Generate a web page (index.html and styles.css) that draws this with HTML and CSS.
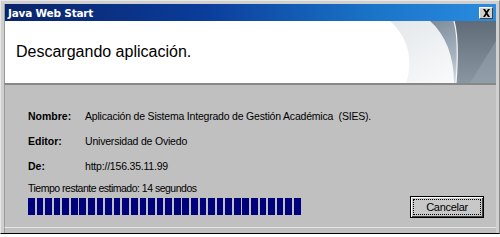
FILE: index.html
```html
<!DOCTYPE html>
<html lang="es">
<head>
<meta charset="utf-8">
<title>Java Web Start</title>
<link rel="stylesheet" href="styles.css">
</head>
<body>
<div class="window">
  <div class="titlebar">
    <span class="title">Java Web Start</span>
    <span class="close"><svg width="9" height="8" viewBox="0 0 9 8"><path d="M1 0h2l1.5 2.2L6 0h2L5.5 4 8 8H6L4.5 5.8 3 8H1l2.5-4z" fill="#000"/></svg></span>
  </div>
  <div class="header">
    <h1 class="heading">Descargando aplicación.</h1>
    <svg class="deco" width="112" height="62" viewBox="0 0 112 62">
      <defs>
        <linearGradient id="g1" x1="0" y1="0" x2="1" y2="1">
          <stop offset="0" stop-color="#e3e7eb"/>
          <stop offset="1" stop-color="#ffffff"/>
        </linearGradient>
        <linearGradient id="g2" x1="0" y1="0" x2="0.6" y2="1">
          <stop offset="0" stop-color="#7d8b99"/>
          <stop offset="0.6" stop-color="#a9b5c1"/>
          <stop offset="1" stop-color="#e8edf1"/>
        </linearGradient>
        <linearGradient id="g3" x1="0" y1="0" x2="0" y2="1">
          <stop offset="0" stop-color="#5f6b77"/>
          <stop offset="1" stop-color="#8a96a2"/>
        </linearGradient>
      </defs>
      <path d="M6 0 H112 V62 H22 C30 40 24 16 6 0 Z" fill="url(#g1)"/>
      <path d="M46 0 H112 V62 H70 C70 36 62 14 46 0 Z" fill="url(#g2)"/>
      <path d="M70 0 H112 V62 H72 C74 36 74 14 70 0 Z" fill="url(#g3)"/>
      <path d="M70 0 C74 14 74 36 72 62" stroke="#f4f6f8" stroke-width="1.2" fill="none"/>
      <path d="M112 20 L86 62 H112 Z" fill="#9aa6b2" opacity="0.5"/>
    </svg>
  </div>
  <div class="body">
    <div class="info">
      <div class="row"><span class="label">Nombre:</span><span class="value">Aplicación de Sistema Integrado de Gestión Académica&nbsp; (SIES).</span></div>
      <div class="row"><span class="label">Editor:</span><span class="value">Universidad de Oviedo</span></div>
      <div class="row"><span class="label">De:</span><span class="value">http://156.35.11.99</span></div>
    </div>
    <div class="status">Tiempo restante estimado: 14 segundos</div>
    <div class="progress-row">
      <div class="progress">
        <i></i><i></i><i></i><i></i><i></i><i></i><i></i><i></i>
        <i></i><i></i><i></i><i></i><i></i><i></i><i></i><i></i>
        <i></i><i></i><i></i><i></i><i></i><i></i><i></i><i></i>
        <i></i><i></i><i></i><i></i><i></i><i></i><i></i><i></i>
      </div>
      <button class="btn"><span class="focus">Cancelar</span></button>
    </div>
  </div>
  <div class="footer"></div>
</div>
</body>
</html>
```
FILE: styles.css
```css
html, body {
  margin: 0;
  padding: 0;
  background: #ffffff;
}
.window {
  width: 500px;
  height: 234px;
  box-sizing: border-box;
  background: #cfcfcf;
  border-top: 1px solid #e8e8e8;
  border-left: 1px solid #e8e8e8;
  border-right: 1px solid #8a8a8a;
  border-bottom: 1px solid #000000;
  padding: 3px 3px 0 3px;
  display: flex;
  flex-direction: column;
  font-family: "Liberation Sans", sans-serif;
}
.titlebar {
  height: 17px;
  flex: none;
  background: linear-gradient(to right, #0a246a 0%, #0a3c9a 40%, #1a74c8 75%, #2a8ce0 100%);
  display: flex;
  align-items: center;
  justify-content: space-between;
  padding: 0 3px 0 3px;
  border-left: 1px solid #9a9a9a;
}
.title {
  color: #ffffff;
  font-family: "DejaVu Sans", sans-serif;
  font-weight: bold;
  font-size: 10.5px;
  letter-spacing: -0.2px;
}
.close {
  width: 14px;
  height: 12px;
  box-sizing: border-box;
  background: #d4d0c8;
  border: 1px solid;
  border-color: #ffffff #404040 #404040 #ffffff;
  display: flex;
  align-items: center;
  justify-content: center;
}
.header {
  height: 62px;
  flex: none;
  background: #ffffff;
  border-left: 1px solid #9a9a9a;
  display: flex;
  align-items: center;
  justify-content: space-between;
  overflow: hidden;
}
.heading {
  margin: 0 0 0 11px;
  font-family: "Liberation Sans", sans-serif;
  font-weight: normal;
  font-size: 16px;
  color: #000000;
}
.deco {
  flex: none;
  align-self: stretch;
}
.body {
  flex: 1;
  background: #c0c0c0;
  border-top: 2px solid #888888;
  border-left: 1px solid #9a9a9a;
  padding: 18px 0 0 23px;
  font-family: "Liberation Sans", sans-serif;
  font-size: 10.5px;
  letter-spacing: -0.2px;
  color: #000000;
  display: flex;
  flex-direction: column;
}
.info {
  display: flex;
  flex-direction: column;
}
.row {
  height: 25px;
  display: flex;
  align-items: center;
}
.label {
  width: 57px;
  font-weight: bold;
  letter-spacing: 0;
}
.status {
  margin-top: 4px;
  height: 12px;
  line-height: 12px;
  letter-spacing: -0.5px;
}
.progress-row {
  margin-top: 1px;
  height: 23px;
  display: flex;
  align-items: center;
  justify-content: space-between;
  padding-right: 12px;
}
.progress {
  display: flex;
  gap: 1.9px;
  height: 17px;
}
.progress i {
  width: 6.7px;
  height: 17px;
  background: #00007c;
}
.btn {
  width: 74px;
  height: 22px;
  box-sizing: border-box;
  padding: 2px;
  background: #c8c8c8;
  border: 1px solid #000000;
  box-shadow: inset 1px 1px 0 #ffffff, inset -1px -1px 0 #404040;
  font-family: "Liberation Sans", sans-serif;
  font-size: 11px;
  letter-spacing: -0.3px;
  color: #000000;
  display: flex;
}
.focus {
  flex: 1;
  border: 1px dotted #000000;
  display: flex;
  align-items: center;
  justify-content: center;
}
.footer {
  height: 5px;
  flex: none;
  background: #c0c0c0;
  border-top: 1px solid #e6e6e6;
  border-left: 1px solid #9a9a9a;
}
```
